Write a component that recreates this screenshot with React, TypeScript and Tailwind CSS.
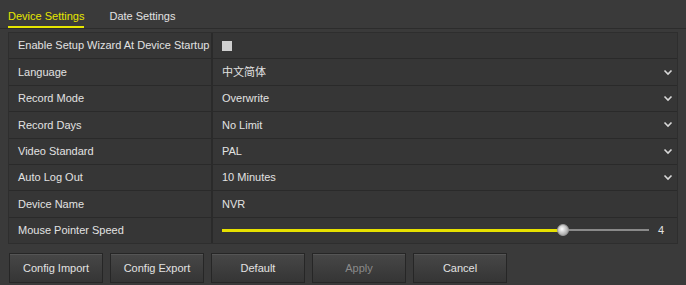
import React from 'react'

const Chevron = () => (
  <svg width="10" height="7" viewBox="0 0 10 7" className="text-[#d8d8d8]">
    <path d="M1.5 1.5 L5 5 L8.5 1.5" fill="none" stroke="currentColor" strokeWidth="1.6" />
  </svg>
)

const rows: { label: string; value?: string; kind: 'check' | 'select' | 'text' | 'slider' }[] = [
  { label: 'Enable Setup Wizard At Device Startup', kind: 'check' },
  { label: 'Language', value: '中文简体', kind: 'select' },
  { label: 'Record Mode', value: 'Overwrite', kind: 'select' },
  { label: 'Record Days', value: 'No Limit', kind: 'select' },
  { label: 'Video Standard', value: 'PAL', kind: 'select' },
  { label: 'Auto Log Out', value: '10 Minutes', kind: 'select' },
  { label: 'Device Name', value: 'NVR', kind: 'text' },
  { label: 'Mouse Pointer Speed', kind: 'slider' },
]

const buttons = ['Config Import', 'Config Export', 'Default', 'Apply', 'Cancel']

export default function App() {
  return (
    <div
      className="flex h-[285px] w-[686px] flex-col bg-[#3a3a3a] text-[11px] text-[#e2e2e2]"
      style={{ fontFamily: '"Liberation Sans", Arial, "Noto Sans CJK SC", sans-serif' }}
    >
      <div className="flex h-[29px] items-end gap-[25px] border-b border-[#2c2c2c] pl-[8px] leading-[14px]">
        <div className="border-b-2 border-[#e6e600] pb-[3px] text-[#e6e600]">Device Settings</div>
        <div className="pb-[5px]">Date Settings</div>
      </div>
      <div className="mx-[8px] mt-[3px] flex flex-col gap-[1px] border border-[#2e2e2e] bg-[#2a2a2a]">
        {rows.map((r) => (
          <div key={r.label} className="flex h-[25.4px] gap-[2px] whitespace-nowrap">
            <div className="flex w-[202px] items-center bg-[#363636] pl-[9px]">{r.label}</div>
            <div className="flex flex-1 items-center bg-[#363636] pl-[9px] pr-[4px]">
              {r.kind === 'check' && <div className="h-[10px] w-[10px] bg-[#cfcfcf]" />}
              {r.kind === 'select' && (
                <>
                  <span className="flex-1">{r.value}</span>
                  <Chevron />
                </>
              )}
              {r.kind === 'text' && <span>{r.value}</span>}
              {r.kind === 'slider' && (
                <div className="flex flex-1 items-center">
                  <div className="relative flex h-[12px] w-[427px] items-center">
                    <div className="h-[3px] w-[341px] bg-[#e6e000]" />
                    <div className="h-[2px] flex-1 bg-[#8a8a8a]" />
                    <div className="absolute left-[335px] top-0 h-[12px] w-[12px] rounded-full border border-[#9a9a9a] bg-[radial-gradient(circle_at_40%_40%,#ffffff,#c8c8c8_45%,#8a8a8a)]" />
                  </div>
                  <span className="ml-[9px]">4</span>
                </div>
              )}
            </div>
          </div>
        ))}
      </div>
      <div className="mt-[9px] flex gap-[7px] pl-[9px]">
        {buttons.map((b) => (
          <div
            key={b}
            className={
              'flex h-[30px] w-[94px] items-center justify-center border border-[#262626] bg-gradient-to-b from-[#474747] to-[#353535] shadow-[inset_0_1px_0_#555] ' +
              (b === 'Apply' ? 'text-[#8a8a8a]' : 'text-[#e2e2e2]')
            }
          >
            {b}
          </div>
        ))}
      </div>
    </div>
  )
}
